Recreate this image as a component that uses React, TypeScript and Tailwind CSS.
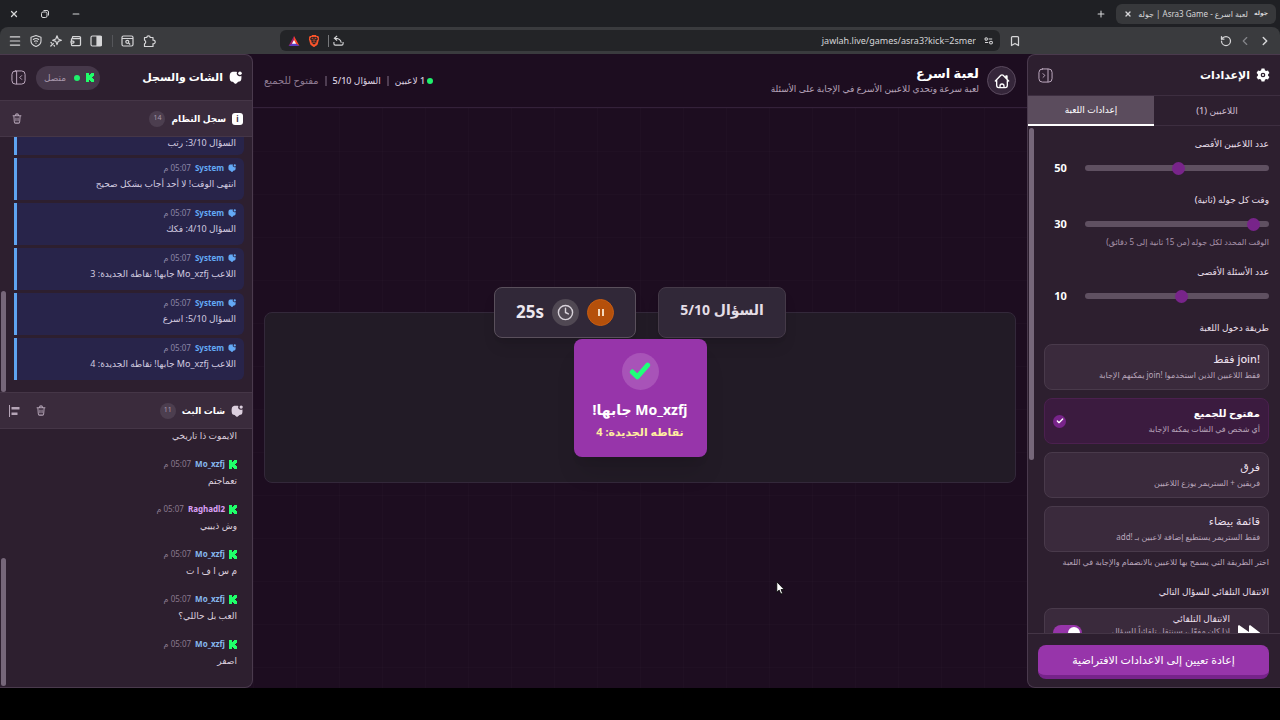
import type { ReactNode } from "react";
import {
  Bookmark, Check, ChevronLeft, ChevronRight, Clock, Menu, Minus,
  Plus, RotateCcw, Wallet, X,
} from "lucide-react";
import { SiBrave } from "react-icons/si";

function KickIcon() {
  return (
    <svg viewBox="0 0 8 9" className="h-[9px] w-2 shrink-0" fill="#1fff6a">
      <path d="M0 0h3v2h1V1h1V0h3v3H7v1H6v1h1v1h1v3H5V8H4V7H3v2H0z" />
    </svg>
  );
}

function ChatIcon({ className }: { className: string }) {
  return (
    <svg viewBox="0 0 24 24" className={className} fill="currentColor">
      <path d="M15 1.800A4.800 4.800 0 0 0 17.500 9a5 5 0 0 0 5.300-.2c.4 2.800.2 6-.5 8-.7 2-2.200 2.800-5.300 3l-3.400 3.200c-1 .9-2.200.9-3.200 0L7.200 20c-3-.2-4.700-1.200-5.300-3.400C1 13 1 8 2 5.100 3 2.300 5.600 1.600 9 1.500c2-.1 4.500 0 6 .3z" />
      <circle cx="20.300" cy="4.200" r="3.300" />
    </svg>
  );
}

function TrashIcon() {
  return (
    <svg viewBox="0 0 24 24" className="h-[11px] w-2.5" preserveAspectRatio="none" fill="none" stroke="currentColor" strokeWidth="2.400" strokeLinecap="round">
      <path d="M2.500 6h19M8 5.500C8.500 3 9.500 2 12 2s3.500 1 4 3.500M4.500 6.500l1 12.500c.2 2 1.200 3 3 3h7c1.800 0 2.800-1 3-3l1-12.500M9.500 11v6M14.500 11v6" />
    </svg>
  );
}

function CollapseIcon({ side }: { side: "left" | "right" }) {
  return (
    <svg viewBox="0 0 24 24" className="size-[15px]" fill="none" stroke="currentColor" strokeWidth="1.600" strokeLinecap="round" strokeLinejoin="round">
      <rect x="1.500" y="1.500" width="21" height="21" rx="5.500" />
      {side === "left" ? <path d="M9 2v20M17 9 14 12l3 3" /> : <path d="M16 2v20M8 9l3 3-3 3" />}
    </svg>
  );
}

function GearIcon() {
  return (
    <svg viewBox="0 0 24 24" className="size-3.5" fill="currentColor" fillRule="evenodd">
      <path d="M9.500.8h5l.8 3.200 2 1.200 3.200-.9L23 8.600l-2.300 2.300v2.200l2.300 2.300-2.500 4.300-3.200-.9-2 1.200-.8 3.200h-5L8.700 20l-2-1.200-3.200.9L1 15.400l2.300-2.300v-2.200L1 8.600l2.500-4.300 3.200.9 2-1.200zM12 8a4 4 0 1 0 0 8 4 4 0 0 0 0-8zm0 2.200a1.800 1.800 0 1 1 0 3.600 1.800 1.800 0 0 1 0-3.600z" />
    </svg>
  );
}

function IconButton({ label, children, className = "" }: { label: string; children: ReactNode; className?: string }) {
  return (
    <button type="button" aria-label={label} className={`flex shrink-0 items-center justify-center ${className}`}>
      {children}
    </button>
  );
}

function BrowserChrome() {
  return (
    <header className="shrink-0 bg-[#1f2024] text-[#d6d6d8]">
      <div className="flex h-[27px] items-center justify-between">
        <div className="flex items-center gap-2.5 pr-1">
          <div className="flex h-5 w-40 items-center gap-1.5 rounded-md bg-[#37383b] px-2">
            <span className="text-[6px] font-bold">جوله</span>
            <span className="flex-1 whitespace-nowrap text-[8px]">لعبة اسرع - Asra3 Game | جوله</span>
            <IconButton label="إغلاق التبويب"><X className="size-2" strokeWidth={4} /></IconButton>
          </div>
          <IconButton label="تبويب جديد"><Plus className="size-2.5" strokeWidth={2.500} /></IconButton>
        </div>
        <div className="flex items-center gap-[21px] pl-[9px]">
          <IconButton label="تصغير"><Minus className="size-2.5" strokeWidth={2.500} /></IconButton>
          <IconButton label="استعادة">
            <svg viewBox="0 0 10 10" className="size-2.5" fill="none" stroke="currentColor">
              <rect x="1.500" y="3" width="5.500" height="5.500" rx="1.500" />
              <path d="M3.500 1.500h3.500a1.500 1.500 0 0 1 1.500 1.500v3.500" />
            </svg>
          </IconButton>
          <IconButton label="إغلاق"><X className="size-2.5" strokeWidth={3} /></IconButton>
        </div>
      </div>
      <div className="flex h-[27px] items-center rounded-t-lg bg-[#3a3b3e]">
        <div className="flex w-[280px] items-center justify-between pl-[9px] pr-2">
          <div className="flex items-center gap-1.5">
            <IconButton label="التالي"><ChevronRight className="size-3.5" strokeWidth={2.500} /></IconButton>
            <IconButton label="السابق" className="text-[#85868a]"><ChevronLeft className="size-3.5" /></IconButton>
            <IconButton label="تحديث"><RotateCcw className="size-3" strokeWidth={2.500} /></IconButton>
          </div>
          <IconButton label="إضافة إشارة"><Bookmark className="size-3" strokeWidth={2.500} /></IconButton>
        </div>
        <div className="flex h-[21px] flex-1 items-center gap-2 rounded-md bg-[#232427] pl-2 pr-1.5">
          <svg viewBox="0 0 12 10" className="h-2 w-2.5 shrink-0" fill="none" stroke="currentColor" strokeWidth="1.300">
            <circle cx="2.500" cy="2.500" r="1.500" /><path d="M5.500 2.500H10M1 7h4" /><circle cx="8.500" cy="7" r="1.800" />
          </svg>
          <input aria-label="العنوان" dir="ltr" defaultValue="jawlah.live/games/asra3?kick=2smer" className="min-w-0 flex-1 bg-transparent text-right text-[9px] outline-none" />
          <svg viewBox="0 0 12 12" className="size-[11px] shrink-0" fill="none" stroke="currentColor" strokeWidth="1.200">
            <path d="M1 7.500V9.500a1.500 1.500 0 0 0 1.500 1.500h7A1.500 1.500 0 0 0 11 9.500v-2M4.500 1 1.500 3.500l3 2.500M2 3.500c4 0 6.500 1.500 7 5" />
          </svg>
          <span className="-mr-1 h-3 w-px bg-[#77787b]" />
          <SiBrave className="size-3 shrink-0 text-[#fb542b]" />
          <svg viewBox="0 0 12 11" className="h-[10px] w-3 shrink-0">
            <path d="M6 0 0 11l6-3.700z" fill="#9e1f63" />
            <path d="M6 0l6 11-6-3.700z" fill="#ff4724" />
            <path d="M0 11h12L6 7z" fill="#5b3cc4" />
            <path d="M6 4.300 8.300 8.500H3.700z" fill="#fff" />
          </svg>
        </div>
        <div className="flex w-[280px] items-center justify-end gap-2 pl-2">
          <IconButton label="الإضافات">
            <svg viewBox="0 0 14 14" className="size-3.5" fill="none" stroke="currentColor" strokeWidth="1.200" strokeLinejoin="round">
              <path d="M2.500 3.500h2.300a1.700 1.700 0 1 1 3.400 0h2.800v2.700a1.800 1.800 0 1 1 0 3.500v2.800H2.500V9.700a1.800 1.800 0 0 0 0-3.400z" />
            </svg>
          </IconButton>
          <IconButton label="بحث في الصفحة">
            <svg viewBox="0 0 13 12" className="h-3 w-[13px]" fill="none" stroke="currentColor" strokeWidth="1.200">
              <rect x="1" y="1" width="11" height="10" rx="1.500" /><path d="M1 3.500h11M7.500 8l1.700 1.500" /><circle cx="6.300" cy="6.800" r="1.500" />
            </svg>
          </IconButton>
          <span className="h-3 w-px bg-[#55565a]" />
          <IconButton label="الشريط الجانبي" className="mr-0.5">
            <svg viewBox="0 0 12 12" className="size-3" fill="none" stroke="currentColor" strokeWidth="1.200">
              <rect x="1" y="1" width="10.500" height="10" rx="1.500" /><path d="M7 1.500h4v9H7z" fill="currentColor" />
            </svg>
          </IconButton>
          <IconButton label="المحفظة"><Wallet className="size-3 -scale-x-100" strokeWidth={2.500} /></IconButton>
          <IconButton label="المساعد">
            <svg viewBox="0 0 12 12" className="size-3" fill="none" stroke="currentColor" strokeWidth="1.200" strokeLinejoin="round">
              <path d="M7 .8 8.200 4 11.400 5.200 8.200 6.400 7 9.600 5.800 6.400 2.600 5.200 5.800 4z" /><path d="M3.300 8.500.8 11M1 7.500l.5.500M4 10.500l.5.500" strokeLinecap="round" />
            </svg>
          </IconButton>
          <IconButton label="الحماية">
            <svg viewBox="0 0 12 12" className="size-3" fill="none" stroke="currentColor" strokeWidth="1.100" strokeLinecap="round" strokeLinejoin="round">
              <path d="M6 .6 11 2.200v3.800c0 2.500-2 4.500-5 5.500-3-1-5-3-5-5.500V2.200z" /><path d="M3.300 4.500c1.700-1.200 3.700-1.200 5.400 0M4.500 6.300c1-.7 2-.7 3 0M6 8v.2" />
            </svg>
          </IconButton>
          <IconButton label="القائمة"><Menu className="size-3.5" /></IconButton>
        </div>
      </div>
    </header>
  );
}

type Slider = { id: string; label: string; min: number; max: number; value: number; hint?: string };

const sliders: Slider[] = [
  { id: "players", label: "عدد اللاعبين الأقصى", min: 2, max: 100, value: 50 },
  { id: "seconds", label: "وقت كل جوله (ثانية)", min: 15, max: 300, value: 30, hint: "الوقت المحدد لكل جوله (من 15 ثانية إلى 5 دقائق)" },
  { id: "questions", label: "عدد الأسئلة الأقصى", min: 1, max: 20, value: 10 },
];

const joinModes = [
  { title: "!join فقط", text: "فقط اللاعبين الذين استخدموا !join يمكنهم الإجابة" },
  { title: "مفتوح للجميع", text: "أي شخص في الشات يمكنه الإجابة", selected: true },
  { title: "فرق", text: "فريقين + الستريمر يوزع اللاعبين" },
  { title: "قائمة بيضاء", text: "فقط الستريمر يستطيع إضافة لاعبين بـ !add" },
];

function SettingsPanel() {
  return (
    <aside className="flex w-[253px] shrink-0 flex-col rounded-l-lg border border-r-0 border-[#4a3a4d] bg-[#2d1f2f] text-[#e9dfea]">
      <div className="flex h-10 shrink-0 items-center justify-between pl-2.5 pr-2.5">
        <h2 className="flex items-center gap-1.5 text-[11px] font-bold text-white"><GearIcon />الإعدادات</h2>
        <IconButton label="طي الإعدادات" className="text-[#bda9bf]"><CollapseIcon side="right" /></IconButton>
      </div>
      <div className="flex h-[31px] shrink-0 border-y border-[#3d2e40] text-[9px] font-medium">
        <button type="button" className="flex-1 text-[#cdbdcf]">اللاعبين (1)</button>
        <button type="button" className="-mb-px flex-1 border-b-2 border-white bg-[#5b4c5d] text-white">إعدادات اللعبة</button>
      </div>
      <div className="flex min-h-0 flex-1 overflow-hidden">
        <div className="min-w-0 flex-1 pl-2.5 pr-[11px] pt-2.5">
          <div className="flex flex-col gap-4">
            {sliders.map((s) => (
              <div key={s.id}>
                <label htmlFor={s.id} className="block text-[9px] font-medium leading-4">{s.label}</label>
                <div className="mt-2 flex h-4 items-center justify-between gap-4">
                  <input
                    id={s.id} type="range" min={s.min} max={s.max} defaultValue={s.value}
                    className="h-1.5 w-[184px] appearance-none rounded-full bg-[#5f5061] [&::-webkit-slider-thumb]:size-[13px] [&::-webkit-slider-thumb]:appearance-none [&::-webkit-slider-thumb]:rounded-full [&::-webkit-slider-thumb]:bg-[#78248a]"
                  />
                  <output htmlFor={s.id} className="flex-1 pl-2 text-center text-[11px] font-bold text-white">{s.value}</output>
                </div>
                {s.hint && <p className="mt-1 whitespace-nowrap text-[8px] leading-3 text-[#a994ab]">{s.hint}</p>}
              </div>
            ))}
            <fieldset>
              <legend className="text-[9px] font-medium leading-4">طريقة دخول اللعبة</legend>
              <div className="mt-2 flex flex-col gap-2">
                {joinModes.map((m) => (
                  <label
                    key={m.title}
                    className={m.selected
                      ? "flex h-[46px] items-center justify-between rounded-lg border border-[#4b204f] bg-[#3b1b3f] px-2"
                      : "flex h-[46px] items-center justify-between rounded-lg border border-[#493a4b] bg-[#3a2a3c] px-2"}
                  >
                    <input type="radio" name="join" defaultChecked={m.selected} className="sr-only" />
                    <span className="flex flex-col whitespace-nowrap">
                      <span className={m.selected ? "text-[10px] font-bold leading-4 text-white" : "text-[11px] font-medium leading-4"}>{m.title}</span>
                      <span className="text-[8px] leading-4 text-[#b9a6bb]">{m.text}</span>
                    </span>
                    {m.selected && (
                      <span className="flex size-[13px] items-center justify-center rounded-full bg-[#78248a] text-white"><Check className="size-2" strokeWidth={4} /></span>
                    )}
                  </label>
                ))}
              </div>
              <p className="mt-1 whitespace-nowrap text-[8px] leading-3 text-[#b9a6bb]">اختر الطريقة التي يسمح بها للاعبين بالانضمام والإجابة في اللعبة</p>
            </fieldset>
            <div>
              <h3 className="text-[9px] font-medium leading-4">الانتقال التلقائي للسؤال التالي</h3>
              <label className="mt-2 flex h-[50px] items-center gap-2 rounded-lg border border-[#493a4b] bg-[#3a2a3c] px-2">
                <svg viewBox="0 0 22 16" className="h-4 w-[22px] shrink-0" fill="#fff"><path d="M0 1.500C0 .3 1 0 2 .7L11 7V1.500c0-1.200 1-1.500 2-.8l8.500 6.500c.7.500.7 1.100 0 1.600L13 15.300c-1 .7-2 .4-2-.8V9l-9 6.300c-1 .7-2 .4-2-.8z" /></svg>
                <span className="flex min-w-0 flex-1 flex-col whitespace-nowrap pb-4">
                  <span className="text-[9px] font-medium leading-3">الانتقال التلقائي</span>
                  <span className="text-[8px] leading-3 text-[#b9a6bb]">إذا كان مفعّل، سينتقل تلقائياً للسؤال</span>
                </span>
                <input type="checkbox" role="switch" defaultChecked className="sr-only" />
                <span className="flex h-4 w-[29px] shrink-0 items-center rounded-full bg-[#9735aa] px-0.5"><span className="size-3 rounded-full bg-white" /></span>
              </label>
            </div>
          </div>
        </div>
        <div className="w-1.5 shrink-0 pt-0.5"><div className="h-[332px] w-[5px] rounded-full bg-[#76677a]" /></div>
      </div>
      <div className="shrink-0 border-t border-[#443546] pb-2 pl-2.5 pr-[11px] pt-[11px]">
        <button type="button" className="h-[34px] w-full rounded-lg border-b-4 border-[#76238a] bg-[#9735aa] text-[11px] font-medium text-white">إعادة تعيين إلى الاعدادات الافتراضية</button>
      </div>
    </aside>
  );
}

function GameArea() {
  return (
    <main className="flex min-w-0 flex-1 flex-col bg-[#1d0d20]">
      <div className="flex h-[54px] shrink-0 items-center justify-between border-b border-[#34213a] px-[11px]">
        <div className="flex items-center gap-2">
          <a href="#home" aria-label="الرئيسية" className="flex size-[29px] items-center justify-center rounded-full border border-[#5a4a5e] bg-[#35263a] text-white">
            <svg viewBox="0 0 24 24" className="size-4" fill="none" stroke="currentColor" strokeWidth="2" strokeLinecap="round" strokeLinejoin="round">
              <path d="M2 12 10.300 3.500c1-1 2.400-1 3.400 0L22 12M18 7.500V4.500h1.500V9M4 11v7.500C4 20.500 5 22 7 22h10c2 0 3-1.500 3-3.500V11M9 22v-2.500a3 3 0 0 1 6 0V22" />
            </svg>
          </a>
          <div>
            <h1 className="text-[13px] font-bold leading-4 text-white">لعبة اسرع</h1>
            <p className="text-[9px] leading-4 text-[#b5a3b8]">لعبة سرعة وتحدي للاعبين الأسرع في الإجابة على الأسئلة</p>
          </div>
        </div>
        <div className="flex items-center gap-1.5 text-[9px] font-medium text-[#ded2e0]">
          <span className="flex items-center gap-0.5"><span className="size-1.5 rounded-full bg-[#1ff06c]" />1 لاعبين</span>
          <span className="h-2.5 w-0.5 bg-[#4e3d52]" />
          <span>السؤال 5/10</span>
          <span className="h-2.5 w-0.5 bg-[#4e3d52]" />
          <span className="text-[10px] text-[#8d7a91]">مفتوح للجميع</span>
        </div>
      </div>
      <div className="flex flex-1 flex-col justify-center bg-[linear-gradient(to_right,#ffffff03_1px,transparent_1px),linear-gradient(to_bottom,#ffffff03_1px,transparent_1px)] bg-[size:43px_43px] px-[11px] pb-0.5">
        <section className="flex flex-col items-center rounded-lg border border-[#33283a] bg-[#221b26] pb-[25px]">
          <div className="-mt-[26px] flex gap-[22px]">
            <div className="flex h-[51px] w-32 justify-center rounded-lg border border-[#453a48] bg-[#312838] pt-2.5 text-[14px] font-bold leading-6 text-[#e4dee6] shadow-lg">السؤال 5/10</div>
            <div className="flex h-[51px] w-[142px] items-center justify-center gap-2 rounded-lg border border-[#5a505c] bg-[#312838] shadow-lg">
              <IconButton label="إيقاف مؤقت" className="size-[27px] rounded-full border border-[#c75c12] bg-[#b5500b]">
                <span className="flex gap-0.5"><span className="h-[7px] w-0.5 bg-[#f3d9bf]" /><span className="h-[7px] w-0.5 bg-[#f3d9bf]" /></span>
              </IconButton>
              <span className="flex size-[27px] items-center justify-center rounded-full bg-[#504853] text-[#d8d2da]"><Clock className="size-[17px]" /></span>
              <span className="text-[17px] font-bold text-[#ece7ee]">25s</span>
            </div>
          </div>
          <div className="mt-px flex h-[118px] w-[133px] flex-col items-center rounded-lg bg-[#9735aa] pt-3.5 shadow-xl">
            <span className="flex size-[37px] items-center justify-center rounded-full bg-[#a853b8]">
              <svg viewBox="0 0 24 20" className="h-[18px] w-[22px]" fill="none" stroke="#1fff7a" strokeWidth="5.500" strokeLinecap="round" strokeLinejoin="round"><path d="M3.500 11 9 16.500 20.500 3.500" /></svg>
            </span>
            <p className="mt-2.5 whitespace-nowrap text-[14px] font-bold leading-5 text-white">Mo_xzfj جابها!</p>
            <p className="mt-1 whitespace-nowrap text-[11px] font-bold leading-4 text-[#ffeea0]">نقاطه الجديدة: 4</p>
          </div>
        </section>
      </div>
    </main>
  );
}

const systemLog = [
  "انتهى الوقت! لا أحد أجاب بشكل صحيح",
  "السؤال 4/10: فكك",
  "اللاعب Mo_xzfj جابها! نقاطه الجديدة: 3",
  "السؤال 5/10: اسرع",
  "اللاعب Mo_xzfj جابها! نقاطه الجديدة: 4",
];

const chat = [
  { name: "Mo_xzfj", text: "تعماجتم" },
  { name: "Raghadl2", text: "وش ذيييي", pink: true },
  { name: "Mo_xzfj", text: "م س ا ف ا ت" },
  { name: "Mo_xzfj", text: "العب بل حاللي؟" },
  { name: "Mo_xzfj", text: "اصفر" },
];

function ListHeader({ icon, title, count, children }: { icon: ReactNode; title: string; count: number; children: ReactNode }) {
  return (
    <div className="flex h-[37px] shrink-0 items-center gap-1.5 border-y border-[#453647] bg-[#3a2b3c] pl-2 pr-[9px]">
      {icon}
      <h3 className="text-[9px] font-bold text-white">{title}</h3>
      <span className="flex size-4 items-center justify-center rounded-full bg-[#4c3e4f] text-[7px] text-[#a897aa]">{count}</span>
      <div className="mr-auto flex items-center gap-4 text-[#b5a5b7]">{children}</div>
    </div>
  );
}

function ChatPanel() {
  return (
    <aside className="flex w-[253px] shrink-0 flex-col overflow-hidden rounded-r-lg border border-l-0 border-[#4a3a4d] bg-[#2d1f2f] text-[#dccfde]">
      <div className="flex h-[45px] shrink-0 items-center pl-[11px] pr-2.5">
        <h2 className="flex items-center gap-1.5 text-[11px] font-bold text-white"><ChatIcon className="size-[13px]" />الشات والسجل</h2>
        <span className="mr-auto flex h-6 items-center gap-1.5 rounded-full bg-[#46384a] px-1.5 text-[9px] text-[#a797aa]">
          <KickIcon /><span className="size-1.5 rounded-full bg-[#1ff06c]" /><span className="px-0.5">متصل</span>
        </span>
        <IconButton label="طي الشات" className="mr-2.5 text-[#bda9bf]"><CollapseIcon side="left" /></IconButton>
      </div>
      <ListHeader
        icon={<span className="flex h-3 w-[11px] items-center justify-center rounded-[3px] bg-white text-[8px] font-bold text-[#3a2b3c]">i</span>}
        title="سجل النظام" count={14}
      >
        <IconButton label="مسح السجل" className="pl-1"><TrashIcon /></IconButton>
      </ListHeader>
      <div className="flex h-[255px] shrink-0 overflow-hidden">
        <ul className="flex min-w-0 flex-1 flex-col justify-end gap-[3px] pb-3 pl-2 pr-2">
          <li className="h-[18px] shrink-0 whitespace-nowrap rounded-br-md border-l-[3px] border-[#5ea3f0] bg-[#28244a] pr-2 text-[9px] leading-3 text-[#d3cce0]">السؤال 3/10: رتب</li>
          {systemLog.map((text) => (
            <li key={text} className="flex h-[42px] shrink-0 flex-col justify-center gap-0.5 whitespace-nowrap rounded-r-md border-l-[3px] border-[#5ea3f0] bg-[#28244a] pb-1 pr-2">
              <span className="flex items-center gap-1 text-[8px] leading-3">
                <ChatIcon className="size-2 text-[#63a9f5]" />
                <b className="text-[#63a9f5]">System</b>
                <time className="text-[#8c86a5]">05:07 م</time>
              </span>
              <span className="text-[9px] leading-4 text-[#d3cce0]">{text}</span>
            </li>
          ))}
        </ul>
        <div className="flex w-1.5 shrink-0 flex-col justify-end pl-px"><div className="h-[101px] rounded-full bg-[#76677a]" /></div>
      </div>
      <ListHeader icon={<ChatIcon className="size-3" />} title="شات البث" count={11}>
        <IconButton label="مسح الشات"><TrashIcon /></IconButton>
        <IconButton label="محاذاة">
          <svg viewBox="0 0 12 12" className="size-3" fill="currentColor"><path d="M1 0h1v12H1zM3.500 2h8v2.500h-8zM3.500 7.500h6V10h-6z" /></svg>
        </IconButton>
      </ListHeader>
      <div className="flex min-h-0 flex-1 overflow-hidden">
        <ul className="flex min-w-0 flex-1 flex-col justify-end gap-[3px] pb-[18px] pr-[15px]">
          <li className="whitespace-nowrap text-[9px] leading-4">الايموت ذا تاريخي</li>
          {chat.map((m) => (
            <li key={m.text} className="flex h-[42px] shrink-0 flex-col justify-end gap-[3px] whitespace-nowrap">
              <span className="flex items-center gap-1 text-[8px] leading-3">
                <KickIcon />
                <b className={m.pink ? "text-[#dba0f5]" : "text-[#86b8ee]"}>{m.name}</b>
                <time className="text-[#8b7a8e]">05:07 م</time>
              </span>
              <span className="text-[9px] leading-4">{m.text}</span>
            </li>
          ))}
        </ul>
        <div className="flex w-1.5 shrink-0 flex-col justify-end pb-px pl-px"><div className="h-[128px] rounded-full bg-[#76677a]" /></div>
      </div>
    </aside>
  );
}

export default function App() {
  return (
    <div dir="rtl" className="flex h-screen flex-col overflow-hidden bg-black pb-8 font-['Noto_Sans','DejaVu_Sans',sans-serif]">
      <BrowserChrome />
      <div className="flex min-h-0 flex-1 bg-[#1d0d20]">
        <SettingsPanel />
        <GameArea />
        <ChatPanel />
      </div>
      <svg viewBox="0 0 10 14" className="pointer-events-none fixed left-[776px] top-[581px] h-3.5 w-2.5" fill="#fff" stroke="#000" strokeWidth=".8">
        <path d="M.8.800v10.500l2.400-2.200 1.600 4 1.800-.8-1.600-3.800h3.200z" />
      </svg>
    </div>
  );
}
